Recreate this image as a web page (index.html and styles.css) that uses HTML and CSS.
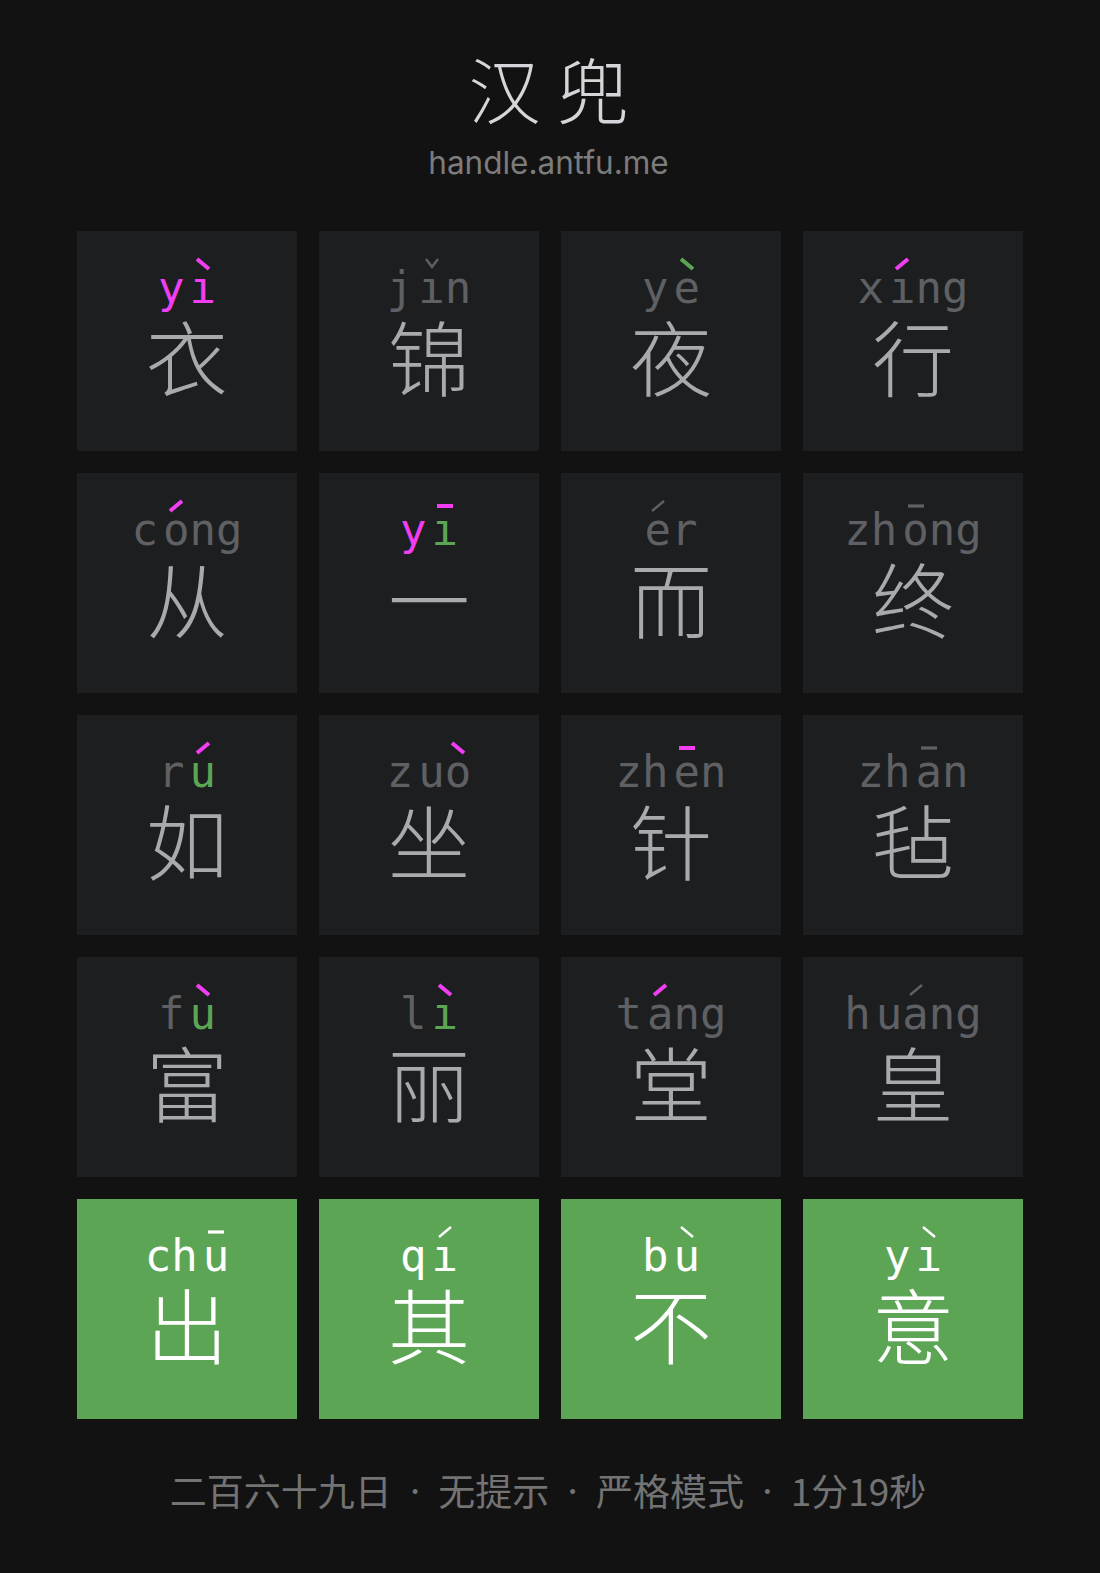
FILE: index.html
```html
<!DOCTYPE html>
<html lang="zh-CN">
<head>
<meta charset="utf-8">
<title>汉兜</title>
<link rel="stylesheet" href="styles.css">
</head>
<body>
<header class="header">
  <h1 class="title">汉 兜</h1>
  <div class="subtitle">handle.antfu.me</div>
</header>

<main class="board">
  <!-- row 1 -->
  <div class="tile">
    <div class="py"><span class="ini m">y</span><span class="fin"><span class="v m">ı<svg class="tone m" viewBox="0 0 18 14"><path d="M3 2 L15 12"/></svg></span></span></div>
    <div class="ch">衣</div>
  </div>
  <div class="tile">
    <div class="py"><span class="ini">j</span><span class="fin"><span class="v">ı<svg class="tone thin" viewBox="0 0 18 14"><path d="M3 2 L9 10 L15 2"/></svg></span>n</span></div>
    <div class="ch">锦</div>
  </div>
  <div class="tile">
    <div class="py"><span class="ini">y</span><span class="fin"><span class="v">e<svg class="tone gr" viewBox="0 0 18 14"><path d="M3 2 L15 12"/></svg></span></span></div>
    <div class="ch">夜</div>
  </div>
  <div class="tile">
    <div class="py"><span class="ini">x</span><span class="fin"><span class="v">ı<svg class="tone m" viewBox="0 0 18 14"><path d="M3 12 L15 2"/></svg></span>ng</span></div>
    <div class="ch">行</div>
  </div>

  <!-- row 2 -->
  <div class="tile">
    <div class="py"><span class="ini">c</span><span class="fin"><span class="v">o<svg class="tone m" viewBox="0 0 18 14"><path d="M3 12 L15 2"/></svg></span>ng</span></div>
    <div class="ch">从</div>
  </div>
  <div class="tile">
    <div class="py"><span class="ini m">y</span><span class="fin"><span class="v gr">ı<svg class="tone t1 m" viewBox="0 0 18 14"><path d="M1 7 L17 7"/></svg></span></span></div>
    <div class="ch">一</div>
  </div>
  <div class="tile">
    <div class="py"><span class="fin"><span class="v">e<svg class="tone thin" viewBox="0 0 18 14"><path d="M3 12 L15 2"/></svg></span>r</span></div>
    <div class="ch">而</div>
  </div>
  <div class="tile">
    <div class="py"><span class="ini">zh</span><span class="fin"><span class="v">o<svg class="tone t1 mid" viewBox="0 0 18 14"><path d="M1 7 L17 7"/></svg></span>ng</span></div>
    <div class="ch">终</div>
  </div>

  <!-- row 3 -->
  <div class="tile">
    <div class="py"><span class="ini">r</span><span class="fin"><span class="v gr">u<svg class="tone m" viewBox="0 0 18 14"><path d="M3 12 L15 2"/></svg></span></span></div>
    <div class="ch">如</div>
  </div>
  <div class="tile">
    <div class="py"><span class="ini">z</span><span class="fin">u<span class="v">o<svg class="tone m" viewBox="0 0 18 14"><path d="M3 2 L15 12"/></svg></span></span></div>
    <div class="ch">坐</div>
  </div>
  <div class="tile">
    <div class="py"><span class="ini">zh</span><span class="fin"><span class="v">e<svg class="tone t1 m" viewBox="0 0 18 14"><path d="M1 7 L17 7"/></svg></span>n</span></div>
    <div class="ch">针</div>
  </div>
  <div class="tile">
    <div class="py"><span class="ini">zh</span><span class="fin"><span class="v">a<svg class="tone t1 mid" viewBox="0 0 18 14"><path d="M1 7 L17 7"/></svg></span>n</span></div>
    <div class="ch">毡</div>
  </div>

  <!-- row 4 -->
  <div class="tile">
    <div class="py"><span class="ini">f</span><span class="fin"><span class="v gr">u<svg class="tone m" viewBox="0 0 18 14"><path d="M3 2 L15 12"/></svg></span></span></div>
    <div class="ch">富</div>
  </div>
  <div class="tile">
    <div class="py"><span class="ini">l</span><span class="fin"><span class="v gr">ı<svg class="tone m" viewBox="0 0 18 14"><path d="M3 2 L15 12"/></svg></span></span></div>
    <div class="ch">丽</div>
  </div>
  <div class="tile">
    <div class="py"><span class="ini">t</span><span class="fin"><span class="v">a<svg class="tone m" viewBox="0 0 18 14"><path d="M3 12 L15 2"/></svg></span>ng</span></div>
    <div class="ch">堂</div>
  </div>
  <div class="tile">
    <div class="py"><span class="ini">h</span><span class="fin">u<span class="v">a<svg class="tone thin" viewBox="0 0 18 14"><path d="M3 12 L15 2"/></svg></span>ng</span></div>
    <div class="ch">皇</div>
  </div>

  <!-- row 5: answer -->
  <div class="tile ok">
    <div class="py"><span class="ini">ch</span><span class="fin"><span class="v">u<svg class="tone t1 mid" viewBox="0 0 18 14"><path d="M1 7 L17 7"/></svg></span></span></div>
    <div class="ch">出</div>
  </div>
  <div class="tile ok">
    <div class="py"><span class="ini">q</span><span class="fin"><span class="v">ı<svg class="tone thin" viewBox="0 0 18 14"><path d="M3 12 L15 2"/></svg></span></span></div>
    <div class="ch">其</div>
  </div>
  <div class="tile ok">
    <div class="py"><span class="ini">b</span><span class="fin"><span class="v">u<svg class="tone thin" viewBox="0 0 18 14"><path d="M3 2 L15 12"/></svg></span></span></div>
    <div class="ch">不</div>
  </div>
  <div class="tile ok">
    <div class="py"><span class="ini">y</span><span class="fin"><span class="v">ı<svg class="tone thin" viewBox="0 0 18 14"><path d="M3 2 L15 12"/></svg></span></span></div>
    <div class="ch">意</div>
  </div>
</main>

<footer class="footer">
  <span>二百六十九日</span><span class="sep">·</span><span>无提示</span><span class="sep">·</span><span>严格模式</span><span class="sep">·</span><span>1分19秒</span>
</footer>
</body>
</html>
```

FILE: styles.css
```css
html, body {
  margin: 0;
  padding: 0;
}

body {
  background: #121212;
  width: 1100px;
  min-height: 1573px;
  font-family: "Noto Sans CJK SC", "Noto Sans", sans-serif;
}

.header {
  padding-top: 51px;
  display: flex;
  flex-direction: column;
  align-items: center;
  margin-right: 3px;
}

.title {
  margin: 0;
  font-family: "Noto Sans CJK SC", sans-serif;
  font-weight: 300;
  font-size: 72px;
  line-height: 72px;
  color: #d5d6d9;
}

.subtitle {
  margin-top: 21px;
  font-family: Inter, "Noto Sans", sans-serif;
  font-size: 31.5px;
  line-height: 38px;
  color: #7c7c7c;
}

.board {
  margin: 49px 0 0 77px;
  width: 946px;
  display: grid;
  grid-template-columns: repeat(4, 1fr);
  gap: 22px;
}

.tile {
  aspect-ratio: 1 / 1;
  background: #1d1e20;
  display: flex;
  flex-direction: column;
  align-items: center;
  padding-top: 36px;
  box-sizing: border-box;
}

.tile.ok {
  background: #5ca555;
}

.py {
  display: flex;
  justify-content: center;
  gap: 5px;
  font-family: "DejaVu Sans Mono", monospace;
  font-size: 44px;
  line-height: 42px;
  height: 42px;
  color: #5f6063;
  white-space: nowrap;
}

.ini, .fin {
  display: inline-block;
}

.v {
  position: relative;
  display: inline-block;
}

.tone {
  position: absolute;
  left: 50%;
  top: -10px;
  width: 18px;
  height: 14px;
  margin-left: -9px;
  fill: none;
  stroke: currentColor;
  stroke-width: 4;
  color: #5f6063;
}

.tone.thin {
  stroke-width: 2.4;
}

.tone.mid {
  stroke-width: 3.2;
}

.m {
  color: #f23ef2;
}

.gr {
  color: #5ca555;
}

.ch {
  margin-top: 5px;
  font-family: "Noto Sans CJK SC", sans-serif;
  font-weight: 300;
  font-size: 82px;
  line-height: 82px;
  color: #a8aaae;
}

.tile.ok .py,
.tile.ok .ch,
.tile.ok .tone {
  color: #ffffff;
}

.footer {
  margin-top: 53px;
  display: flex;
  justify-content: center;
  font-family: "Noto Sans CJK SC", sans-serif;
  font-size: 37px;
  line-height: 37px;
  color: #737373;
  margin-right: 4px;
}

.sep {
  font-family: Inter, sans-serif;
  margin: 0 18px;
}
```
